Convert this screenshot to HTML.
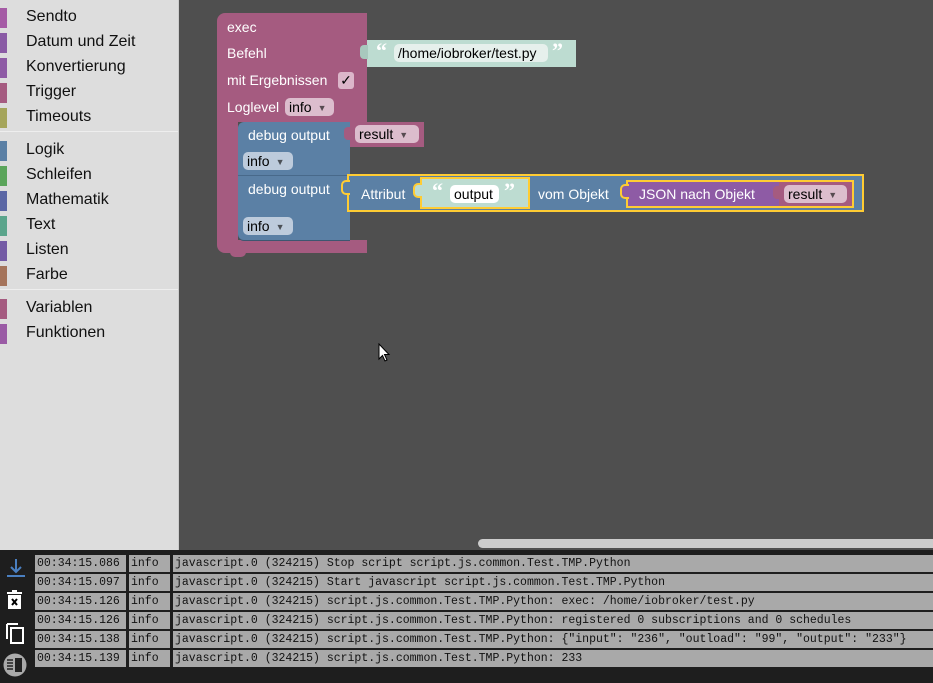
<!DOCTYPE html>
<html><head><meta charset="utf-8"><style>
*{margin:0;padding:0;box-sizing:border-box}
body{width:933px;height:683px;overflow:hidden;background:#4f4f4f;font-family:"Liberation Sans",Arial,sans-serif;position:relative}
.a{position:absolute}
#side{left:0;top:0;width:179px;height:550px;background:#ddd;border-right:1px solid #ccc}
.it{position:absolute;left:0;height:22px;font-size:16px;color:#111;line-height:22px;padding-left:26px;width:178px}
.it i{position:absolute;left:0;top:2px;width:7px;height:20px}
.sep{position:absolute;left:0;width:178px;height:1px;background:#eee}
.w{color:#fff;font-size:14px;position:absolute;white-space:nowrap}
.dd{position:absolute;border-radius:5px;font-size:14px;color:#000;padding-left:4px;line-height:18px;height:18px;white-space:nowrap}
.dd b{font-weight:normal;font-size:9px;margin-left:6px;opacity:.6;vertical-align:1px}
.q{color:#fff;font-size:22px;font-weight:bold;position:absolute;font-family:"Liberation Serif",serif}
#log{left:0;top:550px;width:933px;height:133px;background:#1e1e1e}
.row{position:absolute;height:17px;font-family:"Liberation Mono",monospace;font-size:11.5px;line-height:18px;color:#111}
.row span{position:absolute;top:0;height:17px;background:#a9a9a9;padding-left:2px;white-space:nowrap;overflow:hidden}
</style></head><body>
<div id="side" class="a">
<div class="it" style="top:6px"><i style="background:#a55ba5"></i>Sendto</div>
<div class="it" style="top:31px"><i style="background:#8a5ba5"></i>Datum und Zeit</div>
<div class="it" style="top:56px"><i style="background:#8e5ba5"></i>Konvertierung</div>
<div class="it" style="top:81px"><i style="background:#a55b80"></i>Trigger</div>
<div class="it" style="top:106px"><i style="background:#a5a55b"></i>Timeouts</div>
<div class="sep" style="top:131px"></div>
<div class="it" style="top:139px"><i style="background:#5b80a5"></i>Logik</div>
<div class="it" style="top:164px"><i style="background:#5ba55b"></i>Schleifen</div>
<div class="it" style="top:189px"><i style="background:#5b67a5"></i>Mathematik</div>
<div class="it" style="top:214px"><i style="background:#5ba58c"></i>Text</div>
<div class="it" style="top:239px"><i style="background:#745ba5"></i>Listen</div>
<div class="it" style="top:264px"><i style="background:#a5745b"></i>Farbe</div>
<div class="sep" style="top:289px"></div>
<div class="it" style="top:297px"><i style="background:#a55b80"></i>Variablen</div>
<div class="it" style="top:322px"><i style="background:#9a5ba5"></i>Funktionen</div>
</div>

<div class="a" style="left:217px;top:13px;width:150px;height:109px;background:#a55b80;border-radius:8px 0 0 0"></div>
<div class="a" style="left:217px;top:120px;width:21px;height:122px;background:#a55b80"></div>
<div class="a" style="left:217px;top:240px;width:150px;height:13px;background:#a55b80;border-radius:0 0 0 8px"></div>
<div class="a" style="left:230px;top:252px;width:16px;height:5px;background:#a55b80;border-radius:0 0 6px 6px"></div>
<div class="w" style="left:227px;top:19px">exec</div>
<div class="w" style="left:227px;top:45px">Befehl</div>
<div class="w" style="left:227px;top:72px">mit Ergebnissen</div>
<div class="a" style="left:338px;top:72px;width:16px;height:17px;background:#dcb6ca;border-radius:3px;color:#000;font-size:14px;line-height:17px;text-align:center">✓</div>
<div class="w" style="left:227px;top:99px">Loglevel</div>
<div class="dd" style="left:285px;top:98px;width:49px;background:#dcbdcd">info<b>▼</b></div>

<div class="a" style="left:367px;top:40px;width:209px;height:27px;background:#bddcd1"></div>
<div class="a" style="left:360px;top:45px;width:8px;height:14px;background:#a8c8bd;border-radius:4px 0 0 4px"></div>
<div class="q" style="left:376px;top:38px">“</div>
<div class="dd" style="left:394px;top:44px;width:154px;background:#e6f0ec;padding-left:4px">/home/iobroker/test.py</div>
<div class="q" style="left:552px;top:38px">”</div>

<div class="a" style="left:238px;top:122px;width:112px;height:118px;background:#5b80a5;border-radius:6px 0 0 6px;box-shadow:0 1px 0 #3d5670"></div>
<div class="a" style="left:238px;top:175px;width:112px;height:1px;background:#48698a"></div>
<div class="w" style="left:248px;top:127px">debug output</div>
<div class="dd" style="left:243px;top:152px;width:50px;background:#bdcbdc">info<b>▼</b></div>
<div class="w" style="left:248px;top:181px">debug output</div>
<div class="dd" style="left:243px;top:217px;width:50px;background:#bdcbdc">info<b>▼</b></div>
<div class="a" style="left:350px;top:122px;width:74px;height:25px;background:#a55b80"></div>
<div class="a" style="left:344px;top:127px;width:8px;height:13px;background:#a55b80;border-radius:4px 0 0 4px"></div>
<div class="dd" style="left:355px;top:125px;width:64px;background:#dcbdcd">result<b>▼</b></div>

<div class="a" style="left:347px;top:174px;width:517px;height:38px;background:#5b80a5;border:2px solid #fc3"></div>
<div class="a" style="left:341px;top:180px;width:9px;height:15px;background:#5b80a5;border:2px solid #fc3;border-right:none;border-radius:5px 0 0 5px"></div>
<div class="w" style="left:361px;top:186px">Attribut</div>
<div class="a" style="left:420px;top:177px;width:110px;height:32px;background:#bddcd1;border:2px solid #fc3"></div>
<div class="a" style="left:413px;top:183px;width:9px;height:15px;background:#bddcd1;border:2px solid #fc3;border-right:none;border-radius:5px 0 0 5px"></div>
<div class="q" style="left:432px;top:178px">“</div>
<div class="dd" style="left:450px;top:185px;width:49px;background:#fff">output</div>
<div class="q" style="left:504px;top:178px">”</div>
<div class="w" style="left:538px;top:186px">vom Objekt</div>
<div class="a" style="left:626px;top:180px;width:228px;height:28px;background:#8e5ba5;border:2px solid #fc3"></div>
<div class="a" style="left:620px;top:184px;width:9px;height:15px;background:#8e5ba5;border:2px solid #fc3;border-right:none;border-radius:5px 0 0 5px"></div>
<div class="w" style="left:639px;top:186px">JSON nach Objekt</div>
<div class="a" style="left:779px;top:182px;width:73px;height:24px;background:#a55b80"></div>
<div class="a" style="left:773px;top:186px;width:8px;height:13px;background:#a55b80;border-radius:4px 0 0 4px"></div>
<div class="dd" style="left:784px;top:185px;width:63px;background:#dcbdcd">result<b>▼</b></div>

<svg class="a" style="left:378px;top:343px" width="13" height="20" viewBox="0 0 13 20"><path d="M1 1 L1 16 L4.5 12.5 L7 18 L9 17 L6.5 11.5 L11 11.5 Z" fill="#fff" stroke="#000" stroke-width="1"/></svg>

<div class="a" style="left:478px;top:539px;width:460px;height:9px;background:#ccc;border-radius:5px"></div>

<div id="log" class="a">
<svg class="a" style="left:5px;top:8px" width="22" height="20"><path d="M11 1 V14 M6 9 L11 14 L16 9 M2 18 H20" stroke="#4a7fc0" stroke-width="2" fill="none"/></svg>
<svg class="a" style="left:6px;top:40px" width="18" height="20"><rect x="2" y="5" width="13" height="14" fill="#fff"/><rect x="1" y="2" width="15" height="2" fill="#fff"/><rect x="6" y="0" width="5" height="2" fill="#fff"/><path d="M6 9 L11 15 M11 9 L6 15" stroke="#000" stroke-width="2"/></svg>
<svg class="a" style="left:5px;top:72px" width="20" height="22"><path d="M2 2 V17" stroke="#fff" stroke-width="2"/><path d="M2 2 H13" stroke="#fff" stroke-width="2"/><rect x="6" y="6" width="12" height="15" fill="none" stroke="#fff" stroke-width="2"/></svg>
<svg class="a" style="left:3px;top:103px" width="24" height="24"><circle cx="12" cy="12" r="11.5" fill="#aaa"/><rect x="12" y="5" width="7" height="14" fill="#222"/><path d="M4 7H10M4 10H10M4 13H10M4 16H10" stroke="#222" stroke-width="1.5"/></svg>
<div class="row" style="top:5px;left:0;width:933px"><span style="left:35px;width:91px">00:34:15.086</span><span style="left:129px;width:41px">info</span><span style="left:173px;width:760px">javascript.0 (324215) Stop script script.js.common.Test.TMP.Python</span></div>
<div class="row" style="top:24px;left:0;width:933px"><span style="left:35px;width:91px">00:34:15.097</span><span style="left:129px;width:41px">info</span><span style="left:173px;width:760px">javascript.0 (324215) Start javascript script.js.common.Test.TMP.Python</span></div>
<div class="row" style="top:43px;left:0;width:933px"><span style="left:35px;width:91px">00:34:15.126</span><span style="left:129px;width:41px">info</span><span style="left:173px;width:760px">javascript.0 (324215) script.js.common.Test.TMP.Python: exec: /home/iobroker/test.py</span></div>
<div class="row" style="top:62px;left:0;width:933px"><span style="left:35px;width:91px">00:34:15.126</span><span style="left:129px;width:41px">info</span><span style="left:173px;width:760px">javascript.0 (324215) script.js.common.Test.TMP.Python: registered 0 subscriptions and 0 schedules</span></div>
<div class="row" style="top:81px;left:0;width:933px"><span style="left:35px;width:91px">00:34:15.138</span><span style="left:129px;width:41px">info</span><span style="left:173px;width:760px">javascript.0 (324215) script.js.common.Test.TMP.Python: {"input": "236", "outload": "99", "output": "233"}</span></div>
<div class="row" style="top:100px;left:0;width:933px"><span style="left:35px;width:91px">00:34:15.139</span><span style="left:129px;width:41px">info</span><span style="left:173px;width:760px">javascript.0 (324215) script.js.common.Test.TMP.Python: 233</span></div>
</div>
</body></html>
